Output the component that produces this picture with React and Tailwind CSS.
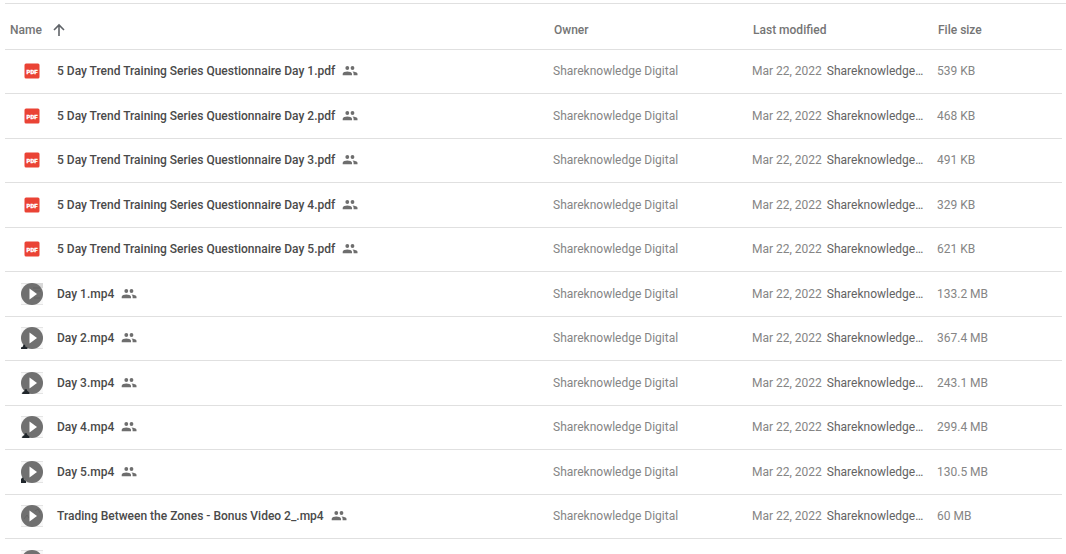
const OWNER = "Shareknowledge Digital";
const EDITOR = "Shareknowledge…";
const MODIFIED = "Mar 22, 2022";

const files = [
    { name: "5 Day Trend Training Series Questionnaire Day 1.pdf", type: "pdf", size: "539 KB" },
    { name: "5 Day Trend Training Series Questionnaire Day 2.pdf", type: "pdf", size: "468 KB" },
    { name: "5 Day Trend Training Series Questionnaire Day 3.pdf", type: "pdf", size: "491 KB" },
    { name: "5 Day Trend Training Series Questionnaire Day 4.pdf", type: "pdf", size: "329 KB" },
    { name: "5 Day Trend Training Series Questionnaire Day 5.pdf", type: "pdf", size: "621 KB" },
    { name: "Day 1.mp4", type: "video", size: "133.2 MB", still: "board" },
    { name: "Day 2.mp4", type: "video", size: "367.4 MB", still: "left" },
    { name: "Day 3.mp4", type: "video", size: "243.1 MB", still: "middle" },
    { name: "Day 4.mp4", type: "video", size: "299.4 MB", still: "middle" },
    { name: "Day 5.mp4", type: "video", size: "130.5 MB", still: "corner" },
    { name: "Trading Between the Zones - Bonus Video 2_.mp4", type: "video", size: "60 MB", still: "chart" },
    { type: "video", still: "chart" },
];

// Silhouette of the presenter, bottom left of the video still
const presenters = {
    left: "M0 22v-1.500l2-1 .3-1.700h1.700l.4 1.600 2 1v1.600z",
    middle: "M1 22l.6-2 2-1 .2-1.800h2l.4 1.600 2 1.400.3 1.800z",
    corner: "M0 22v-4l1.500-1.500 1 .3.500 2 2 1.300v1.900z",
};

function ArrowUpIcon() {
    return (
        <svg viewBox="0 0 12 14" className="h-[14px] w-3" fill="none" stroke="#5f6368" strokeWidth="1.600" aria-hidden="true">
            <path d="M6 13V2M1 7l5-5 5 5" />
        </svg>
    );
}

function PdfIcon() {
    return (
        <svg viewBox="0 0 16 16" className="mx-[3px] size-4 shrink-0" aria-hidden="true">
            <rect x="0.500" y="0.500" width="15" height="15" rx="1.500" fill="#ea4335" />
            <g transform="translate(8 8)">
                <text
                    y="2.500"
                    textAnchor="middle"
                    fill="#fff"
                    stroke="#fff"
                    strokeWidth="0.300"
                    className="font-[Roboto,sans-serif] text-[6px] font-black"
                >
                    PDF
                </text>
            </g>
        </svg>
    );
}

function SharedIcon() {
    return (
        <svg viewBox="0 0 16 16" className="ml-[7px] size-4 shrink-0" fill="#6e6e6e" role="img" aria-label="Shared">
            <circle cx="5.300" cy="5" r="1.900" />
            <circle cx="10.500" cy="5" r="1.900" />
            <path d="M.7 12.200v-1.400c0-1.500 2.700-2.300 4.600-2.300s4.700.8 4.700 2.300v1.400zM10.500 8.600c2.200.1 5 .9 5 2.200v1.400h-3.900v-1.400c0-.9-.4-1.600-1.100-2.200z" />
        </svg>
    );
}

function VideoThumb({ still }) {
    return (
        <svg viewBox="0 0 22 22" className="size-[22px] shrink-0" aria-hidden="true">
            <rect width="22" height="22" fill="#f8f8f8" />
            <path d="M0 .5h22M0 21.500h22" stroke="#e4e4e4" />
            {still === "board" && <path d="M14 0h8v5h-4z" fill="#d8d8d8" />}
            <circle cx="11" cy="11" r="11" fill="#707070" />
            {still === "board" && <path d="M12 5h7M14 8h6M13 15h6" stroke="#626262" />}
            {still === "chart" && <path d="M3 14l3-4 2 3M14 6l3-2 2 4" fill="none" stroke="#646464" />}
            {presenters[still] && <path d={presenters[still]} fill="#20262b" />}
            <path d="M8.500 5.500v11l7.500-5.500z" fill="#fff" />
        </svg>
    );
}

function FileRow({ file }) {
    return (
        <tr className="border-b border-[#e0e0e0] odd:h-[44px] even:h-[45px]">
            <td>
                <div className="flex items-center pl-4">
                    {file.type === "pdf" ? <PdfIcon /> : <VideoThumb still={file.still} />}
                    {file.name && (
                        <>
                            <span className="ml-[14px] whitespace-nowrap font-medium text-[#4a4a4a]">{file.name}</span>
                            <SharedIcon />
                        </>
                    )}
                </div>
            </td>
            {file.name && (
                <>
                    <td className="text-[#858585]">{OWNER}</td>
                    <td>
                        <div className="flex gap-[5px] whitespace-nowrap">
                            <span className="text-[#858585]">{MODIFIED}</span>
                            <span className="text-[#636363]">{EDITOR}</span>
                        </div>
                    </td>
                    <td className="text-[#858585]">{file.size}</td>
                </>
            )}
        </tr>
    );
}

export default function App() {
    return (
        <main className="h-screen overflow-hidden bg-white pt-[3px] pl-[5px] font-[Roboto,sans-serif] text-[12px] leading-4">
            <div className="border-t border-[#e0e0e0] pr-1">
                <table className="w-full table-fixed border-collapse text-left">
                    <colgroup>
                        <col />
                        <col className="w-[199px]" />
                        <col className="w-[185px]" />
                        <col className="w-[125px]" />
                    </colgroup>
                    <thead>
                        <tr className="h-[45px] border-b border-[#e0e0e0] text-[#757575]">
                            <th className="pt-2 pl-[5px] font-medium" aria-sort="ascending">
                                <button type="button" className="flex items-center gap-[11px]">
                                    Name
                                    <ArrowUpIcon />
                                </button>
                            </th>
                            <th className="pt-2 pl-px font-medium">Owner</th>
                            <th className="pt-2 pl-px font-medium">Last modified</th>
                            <th className="pt-2 pl-px font-medium">File size</th>
                        </tr>
                    </thead>
                    <tbody>
                        {files.map((file, idx) => (
                            <FileRow key={idx} file={file} />
                        ))}
                    </tbody>
                </table>
            </div>
        </main>
    );
}
